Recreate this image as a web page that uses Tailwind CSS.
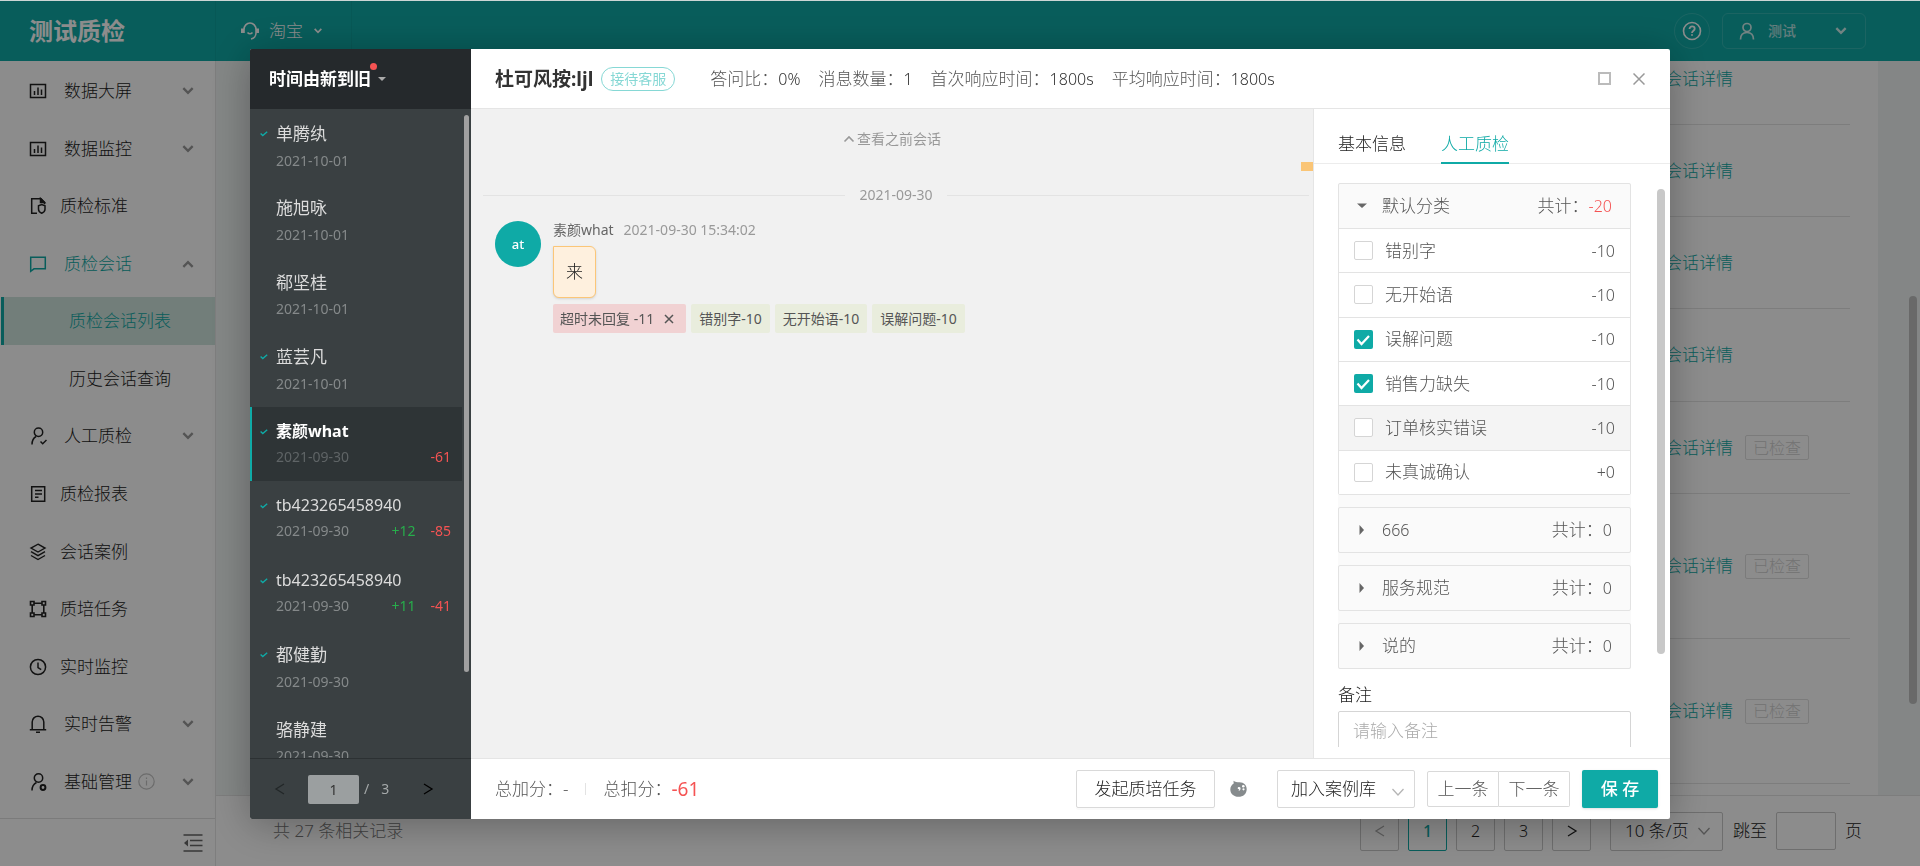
<!DOCTYPE html>
<html lang="zh-CN">
<head>
<meta charset="utf-8">
<title>测试质检</title>
<script src="https://cdn.jsdelivr.net/npm/@tailwindcss/browser@4"></script>
</head>
<body class="h-screen overflow-hidden bg-[#ccd6d5] pt-px font-['Noto_Sans','Noto_Sans_CJK_SC',sans-serif] text-[17px] font-light leading-6 text-[#222]">
<svg class="hidden" xmlns="http://www.w3.org/2000/svg">
  <symbol id="down" viewBox="0 0 12 12"><path d="M2 3.500l4 4 4-4" fill="none" stroke="currentColor" stroke-width="2"/></symbol>
  <symbol id="up" viewBox="0 0 12 12"><path d="M2 8.500l4-4 4 4" fill="none" stroke="currentColor" stroke-width="2"/></symbol>
  <symbol id="thin-up" viewBox="0 0 12 12"><path d="M1.500 8.500L6 4l4.500 4.500" fill="none" stroke="currentColor" stroke-width="1.600"/></symbol>
  <symbol id="thin-down" viewBox="0 0 14 14"><path d="M1.500 4l5.500 6 5.500-6" fill="none" stroke="currentColor" stroke-width="1.300"/></symbol>
  <symbol id="left" viewBox="0 0 12 12"><path d="M10 1L2 6l8 5" fill="none" stroke="currentColor" stroke-width="1.300"/></symbol>
  <symbol id="right" viewBox="0 0 12 12"><path d="M2 1l8 5-8 5" fill="none" stroke="currentColor" stroke-width="1.300"/></symbol>
  <symbol id="tick" viewBox="0 0 8 6"><path d="M.6 2.600l2.200 2L7.200.8" fill="none" stroke="currentColor" stroke-width="1.400"/></symbol>
  <symbol id="chart" viewBox="0 0 18 18"><path d="M1.500 2.500h15v13h-15zM5.500 9v4M9 5.500V13M12.500 7.500V13" fill="none" stroke="currentColor" stroke-width="1.500"/></symbol>
  <symbol id="user" viewBox="0 0 18 18"><circle cx="9" cy="5.500" r="4" fill="none" stroke="currentColor" stroke-width="1.700"/><path d="M2.500 17.500c0-4.500 2.500-7 6.500-7s6.500 2.500 6.500 7" fill="none" stroke="currentColor" stroke-width="1.700"/></symbol>
</svg>

<div class="flex h-full flex-col">
  <header class="flex h-[60px] shrink-0 items-center bg-[#0faaa6] pr-[54px] text-white">
    <h1 class="flex h-full w-[216px] items-center border-r border-black/5 pl-[29px] text-2xl font-bold">测试质检</h1>
    <button class="flex h-full w-[136px] items-center border-r border-black/5 pl-6">
      <svg class="size-5" viewBox="0 0 20 20" fill="none" stroke="currentColor" stroke-width="1.600"><path d="M4 12V8.500a6 6.500 0 0 1 12 0V12a6 6 0 0 1-5 6M7.500 11.500c1.500 1.700 3.500 1.700 5 0"/><path d="M2.500 7.500v4.500M17.500 7.500v4.500" stroke-width="3"/></svg>
      <span class="ml-[9px]">淘宝</span>
      <svg class="ml-2.5 size-2.5"><use href="#down"/></svg>
    </button>
    <button aria-label="帮助" class="ml-auto flex size-9 items-center justify-center rounded-full border border-white/15">
      <svg class="size-5" viewBox="0 0 20 20" fill="none" stroke="currentColor"><circle cx="10" cy="10" r="8.500" stroke-width="1.600"/><path d="M7.500 8c0-3.500 5.200-3.200 5.200-.3 0 2-2.700 2-2.700 4.200M10 13.200v1.600" stroke-width="1.800"/></svg>
    </button>
    <button class="ml-3 flex h-9 w-36 items-center rounded-md border border-white/15 pl-[15px] pr-[17px] text-white/80">
      <svg class="size-[18px]"><use href="#user"/></svg>
      <span class="ml-3 text-sm font-medium text-white/70">测试</span>
      <svg class="ml-auto size-3.5"><use href="#down"/></svg>
    </button>
  </header>

  <div class="flex min-h-0 flex-1">
    <aside class="flex w-[216px] shrink-0 flex-col border-r border-[#e6e6e6] bg-white">
      <nav class="flex min-h-0 flex-1 flex-col justify-between pb-3 pt-1.5">
        <a href="#" class="flex h-12 items-center pl-[29px] pr-5"><svg class="size-[18px]"><use href="#chart"/></svg><span class="ml-[17px]">数据大屏</span><svg class="ml-auto size-3.5 text-[#999]"><use href="#down"/></svg></a>
        <a href="#" class="flex h-12 items-center pl-[29px] pr-5"><svg class="size-[18px]"><use href="#chart"/></svg><span class="ml-[17px]">数据监控</span><svg class="ml-auto size-3.5 text-[#999]"><use href="#down"/></svg></a>
        <a href="#" class="flex h-12 items-center pl-[29px]"><svg class="size-[18px]" viewBox="0 0 18 18" fill="none" stroke="currentColor" stroke-width="1.500"><path d="M8 16.200H2.700V1.700H12l3.500 3.500v2"/><path d="M11.500 1.500v4h4z" fill="currentColor"/><path d="M9.500 8.700l3.200-1.200 3.300 1.200v3.500c0 2-1.500 3.300-3.300 4-1.700-.7-3.200-2-3.200-4z"/></svg><span class="ml-[13px]">质检标准</span></a>
        <a href="#" class="flex h-12 items-center pl-[29px] pr-5 text-[#0faaa6]"><svg class="size-[18px]" viewBox="0 0 18 18" fill="none" stroke="currentColor" stroke-width="1.500"><path d="M1.700 2.200h14.600v11.600H5l-3.300 2.500z"/></svg><span class="ml-[17px]">质检会话</span><svg class="ml-auto size-3.5 text-[#999]"><use href="#up"/></svg></a>
        <a href="#" class="ml-px flex h-12 items-center border-l-[3px] border-[#0faaa6] bg-[#cfe5df] pl-[65px] text-[#0faaa6]">质检会话列表</a>
        <a href="#" class="flex h-12 items-center pl-[69px]">历史会话查询</a>
        <a href="#" class="flex h-12 items-center pl-[29px] pr-5"><svg class="size-[18px]" viewBox="0 0 18 18" fill="none" stroke="currentColor" stroke-width="1.500"><circle cx="9.500" cy="5.200" r="4.200"/><path d="M3 17.500c0-4 1.500-6.500 4-8M11.500 14.500l2.200 2.200 3.800-3.700"/></svg><span class="ml-[17px]">人工质检</span><svg class="ml-auto size-3.5 text-[#999]"><use href="#down"/></svg></a>
        <a href="#" class="flex h-12 items-center pl-[29px]"><svg class="size-[18px]" viewBox="0 0 18 18" fill="none" stroke="currentColor" stroke-width="1.500"><path d="M2.700 1.700h13v14.600h-13zM6 5.500h7M6 9h7M6 12.300h3.500"/></svg><span class="ml-[13px]">质检报表</span></a>
        <a href="#" class="flex h-12 items-center pl-[29px]"><svg class="size-[18px]" viewBox="0 0 18 18" fill="none" stroke="currentColor" stroke-width="1.400"><path d="M9 1.200l7 3.900-7 3.900-7-3.900zM2 8.700l7 4 7-4M2 12.500l7 4 7-4"/></svg><span class="ml-[13px]">会话案例</span></a>
        <a href="#" class="flex h-12 items-center pl-[29px]"><svg class="size-[18px]" viewBox="0 0 18 18" fill="none" stroke="currentColor" stroke-width="1.600"><path d="M1.500 1.500h3.500V5H1.500zM13 1.500h3.500V5H13zM1.500 13h3.500v3.500H1.500zM13 13h3.500v3.500H13zM5 3.200h8M5 14.800h8M3.200 5v8M14.800 5v8"/></svg><span class="ml-[13px]">质培任务</span></a>
        <a href="#" class="flex h-12 items-center pl-[29px]"><svg class="size-[18px]" viewBox="0 0 18 18" fill="none" stroke="currentColor" stroke-width="1.500"><circle cx="9" cy="9" r="7.600"/><path d="M9 4.500v5l3.200 2.200"/></svg><span class="ml-[13px]">实时监控</span></a>
        <a href="#" class="flex h-12 items-center pl-[29px] pr-5"><svg class="size-[18px]" viewBox="0 0 18 18" fill="none" stroke="currentColor" stroke-width="1.500"><path d="M.8 14.700h16.400M3.200 14.500V7a5.800 5.800 0 0 1 11.600 0v7.500M7 17.200h4"/></svg><span class="ml-[17px]">实时告警</span><svg class="ml-auto size-3.5 text-[#999]"><use href="#down"/></svg></a>
        <a href="#" class="flex h-12 items-center pl-[29px] pr-5"><svg class="size-[18px]" viewBox="0 0 18 18" fill="none" stroke="currentColor" stroke-width="1.500"><circle cx="9.500" cy="5" r="4.200"/><path d="M3 17.500c0-4 1.500-6.500 4.500-8"/><circle cx="14" cy="14.500" r="2.400" stroke-width="2"/></svg><span class="ml-[17px]">基础管理</span><svg class="ml-1.5 size-[17px] text-[#c4c4c4]" viewBox="0 0 17 17" fill="none" stroke="currentColor" stroke-width="1.200"><circle cx="8.500" cy="8.500" r="7.700"/><path d="M8.500 7.500v5M8.500 4.500v1.400"/></svg><svg class="ml-auto size-3.5 text-[#999]"><use href="#down"/></svg></a>
      </nav>
      <div class="flex h-12 shrink-0 items-center justify-end border-t border-[#e0e0e0] pr-3">
        <button aria-label="收起菜单" class="text-[#666]"><svg class="size-5" viewBox="0 0 20 20" fill="none" stroke="currentColor" stroke-width="1.500"><path d="M.5 2h19M7 7.500h12.500M7 12.500h12.500M.5 18h19"/><path d="M5 6.500v7L1 10z" fill="currentColor" stroke="none"/></svg></button>
      </div>
    </aside>

    <main class="relative flex min-w-0 flex-1 flex-col bg-[#f0f5f4]">
      <div class="flex min-h-0 flex-1 flex-col overflow-hidden pl-9 pr-[42px]">
        <div class="flex min-h-0 flex-1 flex-col justify-end bg-white pb-[11px] pl-9 pr-7">
          <div class="flex h-[92px] shrink-0 items-center border-b border-[#e4e4e4] pr-[41px]"><a href="#" class="ml-auto mr-[76px] text-[#0faaa6]">会话详情</a></div>
          <div class="flex h-[92px] shrink-0 items-center border-b border-[#e4e4e4] pr-[41px]"><a href="#" class="ml-auto mr-[76px] text-[#0faaa6]">会话详情</a></div>
          <div class="flex h-[92px] shrink-0 items-center border-b border-[#e4e4e4] pr-[41px]"><a href="#" class="ml-auto mr-[76px] text-[#0faaa6]">会话详情</a></div>
          <div class="flex h-[93px] shrink-0 items-center border-b border-[#e4e4e4] pr-[41px]"><a href="#" class="ml-auto mr-[76px] text-[#0faaa6]">会话详情</a></div>
          <div class="flex h-[92px] shrink-0 items-center border-b border-[#e4e4e4] pr-[41px]"><a href="#" class="ml-auto text-[#0faaa6]">会话详情</a><span class="ml-3 flex h-[25px] w-16 items-center justify-center rounded-xs border border-[#e0e0e0] text-base text-[#d0d0d0]">已检查</span></div>
          <div class="flex h-[145px] shrink-0 items-center border-b border-[#e4e4e4] pr-[41px]"><a href="#" class="ml-auto text-[#0faaa6]">会话详情</a><span class="ml-3 flex h-[25px] w-16 items-center justify-center rounded-xs border border-[#e0e0e0] text-base text-[#d0d0d0]">已检查</span></div>
          <div class="flex h-[145px] shrink-0 items-center border-b border-[#e4e4e4] pr-[41px]"><a href="#" class="ml-auto text-[#0faaa6]">会话详情</a><span class="ml-3 flex h-[25px] w-16 items-center justify-center rounded-xs border border-[#e0e0e0] text-base text-[#d0d0d0]">已检查</span></div>
        </div>
      </div>
      <div class="absolute right-[3px] top-[235px] h-[408px] w-2 rounded-full bg-[#c0c0c0]"></div>
      <footer class="flex h-[71px] shrink-0 items-center border-t border-[#e4e4e4] bg-white pl-[57px] pr-[58px]">
        <span class="text-[#777]">共 27 条相关记录</span>
        <div class="ml-auto flex items-center gap-[9px] text-base">
          <button aria-label="上一页" class="flex size-[39px] items-center justify-center rounded-xs border border-[#c8c8c8] text-[#aaa]"><svg class="size-3"><use href="#left"/></svg></button>
          <button class="size-[39px] rounded-xs border border-[#0faaa6] font-medium text-[#0faaa6]">1</button>
          <button class="size-[39px] rounded-xs border border-[#c8c8c8]">2</button>
          <button class="size-[39px] rounded-xs border border-[#c8c8c8]">3</button>
          <button aria-label="下一页" class="flex size-[39px] items-center justify-center rounded-xs border border-[#c8c8c8]"><svg class="size-3"><use href="#right"/></svg></button>
        </div>
        <div class="relative ml-[19px] h-[39px] w-[113px]">
          <select aria-label="每页条数" class="h-full w-full appearance-none rounded-xs border border-[#c8c8c8] pl-3.5"><option>10 条/页</option></select>
          <svg class="pointer-events-none absolute right-3 top-3 size-3.5 text-[#999]"><use href="#thin-down"/></svg>
        </div>
        <label class="ml-2.5 flex items-center">跳至<input type="text" class="mx-[9px] h-[38px] w-[60px] rounded-xs border border-[#c8c8c8]">页</label>
      </footer>
    </main>
  </div>
</div>

<div class="fixed inset-x-0 bottom-0 top-px flex bg-black/45 px-[250px] pb-[47px] pt-12">
  <section role="dialog" aria-label="会话详情" class="flex min-w-0 flex-1 overflow-hidden rounded-xs bg-white shadow-[0_5px_40px_rgba(0,0,0,0.3)]">
    <div class="flex w-[221px] shrink-0 flex-col bg-[#3a4042] text-white">
      <div class="flex h-[60px] shrink-0 items-center bg-[#25292c] pl-[19px]">
        <button class="relative flex items-center font-bold">时间由新到旧<span class="absolute -top-1 left-[101px] size-[7px] rounded-full bg-[#f55353]"></span><svg class="ml-[7px] size-2 text-[#aaa]" viewBox="0 0 8 8"><path d="M0 2h8L4 6z" fill="currentColor"/></svg></button>
      </div>
      <div class="relative min-h-0 flex-1 overflow-hidden">
        <ul class="mr-[9px] grid h-[670px] auto-rows-fr text-base font-normal text-[#dcdcdc]">
          <li class="grid grid-cols-[26px_1fr] pt-3"><svg class="ml-2.5 mt-2.5 h-1.5 w-2 text-[#0faaa6]"><use href="#tick"/></svg><div><div class="text-[17px]">单腾纨</div><div class="mt-1 text-sm text-[#85898a]">2021-10-01</div></div></li>
          <li class="grid grid-cols-[26px_1fr] pt-3"><div class="col-start-2"><div class="text-[17px]">施旭咏</div><div class="mt-1 text-sm text-[#85898a]">2021-10-01</div></div></li>
          <li class="grid grid-cols-[26px_1fr] pt-3"><div class="col-start-2"><div class="text-[17px]">郗坚桂</div><div class="mt-1 text-sm text-[#85898a]">2021-10-01</div></div></li>
          <li class="grid grid-cols-[26px_1fr] pt-3"><svg class="ml-2.5 mt-2.5 h-1.5 w-2 text-[#0faaa6]"><use href="#tick"/></svg><div><div class="text-[17px]">蓝芸凡</div><div class="mt-1 text-sm text-[#85898a]">2021-10-01</div></div></li>
          <li class="grid grid-cols-[24px_1fr] border-l-2 border-[#0faaa6] bg-[#2e3436] pt-3"><svg class="ml-2 mt-2.5 h-1.5 w-2 text-[#0faaa6]"><use href="#tick"/></svg><div><div class="font-bold text-white">素颜what</div><div class="mt-1 flex pr-[11px] text-sm text-[#5f6466]">2021-09-30<span class="ml-auto text-[#f55353]">-61</span></div></div></li>
          <li class="grid grid-cols-[26px_1fr] pt-3"><svg class="ml-2.5 mt-2.5 h-1.5 w-2 text-[#0faaa6]"><use href="#tick"/></svg><div><div>tb423265458940</div><div class="mt-1 flex pr-[11px] text-sm text-[#85898a]">2021-09-30<span class="ml-auto text-[#27ae4b]">+12</span><span class="ml-[15px] text-[#f55353]">-85</span></div></div></li>
          <li class="grid grid-cols-[26px_1fr] pt-3"><svg class="ml-2.5 mt-2.5 h-1.5 w-2 text-[#0faaa6]"><use href="#tick"/></svg><div><div>tb423265458940</div><div class="mt-1 flex pr-[11px] text-sm text-[#85898a]">2021-09-30<span class="ml-auto text-[#27ae4b]">+11</span><span class="ml-[15px] text-[#f55353]">-41</span></div></div></li>
          <li class="grid grid-cols-[26px_1fr] pt-3"><svg class="ml-2.5 mt-2.5 h-1.5 w-2 text-[#0faaa6]"><use href="#tick"/></svg><div><div class="text-[17px]">都健勤</div><div class="mt-1 text-sm text-[#85898a]">2021-09-30</div></div></li>
          <li class="grid grid-cols-[26px_1fr] pt-3"><div class="col-start-2"><div class="text-[17px]">骆静建</div><div class="mt-1 text-sm text-[#85898a]">2021-09-30</div></div></li>
        </ul>
        <div class="absolute right-0.5 top-1.5 h-[557px] w-[5px] rounded-full bg-[#a0a0a0]"></div>
      </div>
      <div class="flex h-[61px] shrink-0 items-center border-t border-[#2c3133] pl-6 text-sm font-normal text-[#a5a9aa]">
        <button aria-label="上一页" class="text-[#222728]"><svg class="size-3"><use href="#left"/></svg></button>
        <input type="text" aria-label="页码" value="1" class="ml-[22px] h-[29px] w-[51px] rounded-xs bg-[#9b9fa0] text-center text-[#333]">
        <span class="ml-[5px]">/</span><span class="ml-3">3</span>
        <button aria-label="下一页" class="ml-[33px] text-black"><svg class="size-3"><use href="#right"/></svg></button>
      </div>
    </div>

    <div class="flex min-w-0 flex-1 flex-col">
      <div class="flex h-[60px] shrink-0 items-center border-b border-[#e5e5e5] pl-6 pr-[25px] text-[#555]">
        <h2 class="text-[19px] font-bold text-[#333]">杜可风按:ljl</h2>
        <span class="ml-2 flex h-6 w-[74px] items-center justify-center rounded-full border border-[#86d8d5] text-sm font-normal text-[#86d8d5]">接待客服</span>
        <dl class="ml-[35px] flex gap-[18px]">
          <div class="flex"><dt>答问比：</dt><dd class="text-base leading-6 text-[#333]">0%</dd></div>
          <div class="flex"><dt>消息数量：</dt><dd class="text-base leading-6 text-[#333]">1</dd></div>
          <div class="flex"><dt>首次响应时间：</dt><dd class="text-base leading-6 text-[#333]">1800s</dd></div>
          <div class="flex"><dt>平均响应时间：</dt><dd class="text-base leading-6 text-[#333]">1800s</dd></div>
        </dl>
        <button aria-label="最大化" class="ml-auto size-[13px] border-2 border-[#bbb]"></button>
        <button aria-label="关闭" class="ml-[22px] text-[#999]"><svg class="size-3" viewBox="0 0 12 12"><path d="M.5.5l11 11M11.500.5l-11 11" stroke="currentColor" stroke-width="1.500"/></svg></button>
      </div>

      <div class="flex min-h-0 flex-1">
        <div class="relative min-w-0 flex-1 bg-[#f1f1f1] px-1 pt-[18px] text-sm font-normal leading-6">
          <button class="mx-auto flex items-center gap-0.5 leading-6 text-[#999]"><svg class="size-3"><use href="#thin-up"/></svg>查看之前会话</button>
          <div class="ml-2 mt-8 flex items-center gap-3.5 text-[#999]"><hr class="flex-1 border-[#e3e3e3]">2021-09-30<hr class="flex-1 border-[#e3e3e3]"></div>
          <div class="ml-5 mt-[3px] flex gap-3">
            <div class="mt-[11px] flex size-[46px] shrink-0 items-center justify-center rounded-full bg-[#0faaa6] text-[13px] font-medium text-white">at</div>
            <div class="flex flex-col items-start">
              <div class="mt-2 text-[#666]">素颜what<span class="ml-2.5 text-[#999]">2021-09-30 15:34:02</span></div>
              <div class="mt-1 flex h-[52px] w-[43px] items-center justify-center rounded-md rounded-tl-none border border-[#fbc678] bg-[#fef0de] text-[17px] font-light text-[#222] shadow-sm">来</div>
              <div class="mt-1.5 flex gap-[5px] text-[#555]">
                <span class="flex h-[29px] items-center rounded-xs bg-[#f1d2d3] pl-[7px] pr-3">超时未回复 -11<button aria-label="移除" class="ml-2.5"><svg class="size-2.5" viewBox="0 0 10 10"><path d="M1 1l8 8M9 1L1 9" stroke="currentColor" stroke-width="1.500"/></svg></button></span>
                <span class="flex h-[29px] items-center rounded-xs bg-[#e9eddd] px-2">错别字-10</span>
                <span class="flex h-[29px] items-center rounded-xs bg-[#e9eddd] px-2">无开始语-10</span>
                <span class="flex h-[29px] items-center rounded-xs bg-[#e9eddd] px-2">误解问题-10</span>
              </div>
            </div>
          </div>
          <div class="absolute right-0 top-[53px] h-[9px] w-3 bg-[#fac576]"></div>
        </div>

        <div class="relative flex w-[357px] shrink-0 flex-col border-l border-[#e5e5e5] pb-[11px] text-[#555]">
          <div class="flex h-[55px] shrink-0 items-end gap-[35px] border-b border-[#ececec] pl-6">
            <button class="-mb-px h-8 border-b-2 border-transparent pb-2 text-[#222]">基本信息</button>
            <button class="-mb-px h-8 border-b-2 border-[#0faaa6] pb-2 text-[#0faaa6]">人工质检</button>
          </div>
          <div class="min-h-0 flex-1 overflow-hidden pl-6 pr-[39px] pt-[19px]">
            <div class="flex flex-col gap-3 bg-[#fafafa]">
              <div class="rounded-xs border border-[#e3e3e3]">
                <div class="flex h-11 items-center pl-[18px] pr-[18px]"><svg class="size-2.5 text-[#666]" viewBox="0 0 10 10"><path d="M0 2.500h10L5 7z" fill="currentColor"/></svg><span class="ml-[15px]">默认分类</span><span class="ml-auto">共计：</span><span class="text-base text-[#f55353]">-20</span></div>
                <div class="grid h-[266px] auto-rows-fr bg-white">
                  <label class="flex items-center border-t border-[#e3e3e3] px-[15px]"><input type="checkbox" class="size-[19px] appearance-none rounded-xs border border-[#d5d5d5] bg-white"><span class="ml-3">错别字</span><span class="ml-auto text-base">-10</span></label>
                  <label class="flex items-center border-t border-[#e3e3e3] px-[15px]"><input type="checkbox" class="size-[19px] appearance-none rounded-xs border border-[#d5d5d5] bg-white"><span class="ml-3">无开始语</span><span class="ml-auto text-base">-10</span></label>
                  <label class="flex items-center border-t border-[#e3e3e3] px-[15px]"><span class="grid"><input type="checkbox" checked class="col-start-1 row-start-1 size-[19px] appearance-none rounded-xs bg-[#0faaa6]"><svg class="pointer-events-none col-start-1 row-start-1 size-[19px] text-white" viewBox="0 0 19 19"><path d="M3.500 9.500l4 4.500 7.500-8" fill="none" stroke="currentColor" stroke-width="2.200"/></svg></span><span class="ml-3">误解问题</span><span class="ml-auto text-base">-10</span></label>
                  <label class="flex items-center border-t border-[#e3e3e3] px-[15px]"><span class="grid"><input type="checkbox" checked class="col-start-1 row-start-1 size-[19px] appearance-none rounded-xs bg-[#0faaa6]"><svg class="pointer-events-none col-start-1 row-start-1 size-[19px] text-white" viewBox="0 0 19 19"><path d="M3.500 9.500l4 4.500 7.500-8" fill="none" stroke="currentColor" stroke-width="2.200"/></svg></span><span class="ml-3">销售力缺失</span><span class="ml-auto text-base">-10</span></label>
                  <label class="flex items-center border-t border-[#e3e3e3] bg-[#f4f4f4] px-[15px]"><input type="checkbox" class="size-[19px] appearance-none rounded-xs border border-[#d5d5d5] bg-white"><span class="ml-3">订单核实错误</span><span class="ml-auto text-base">-10</span></label>
                  <label class="flex items-center border-t border-[#e3e3e3] px-[15px]"><input type="checkbox" class="size-[19px] appearance-none rounded-xs border border-[#d5d5d5] bg-white"><span class="ml-3">未真诚确认</span><span class="ml-auto text-base">+0</span></label>
                </div>
              </div>
              <button class="flex h-[46px] items-center rounded-xs border border-[#e3e3e3] pl-[18px] pr-[18px]"><svg class="size-2.5 text-[#666]" viewBox="0 0 10 10"><path d="M2.500 0v10L7 5z" fill="currentColor"/></svg><span class="ml-[15px] text-base">666</span><span class="ml-auto">共计：</span><span class="text-base">0</span></button>
              <button class="flex h-[46px] items-center rounded-xs border border-[#e3e3e3] pl-[18px] pr-[18px]"><svg class="size-2.5 text-[#666]" viewBox="0 0 10 10"><path d="M2.500 0v10L7 5z" fill="currentColor"/></svg><span class="ml-[15px]">服务规范</span><span class="ml-auto">共计：</span><span class="text-base">0</span></button>
              <button class="flex h-[46px] items-center rounded-xs border border-[#e3e3e3] pl-[18px] pr-[18px]"><svg class="size-2.5 text-[#666]" viewBox="0 0 10 10"><path d="M2.500 0v10L7 5z" fill="currentColor"/></svg><span class="ml-[15px]">说的</span><span class="ml-auto">共计：</span><span class="text-base">0</span></button>
            </div>
            <label for="remark" class="mt-3.5 block text-[#222]">备注</label>
            <textarea id="remark" placeholder="请输入备注" class="mt-1 block h-20 w-full resize-none rounded-xs border border-[#d5d5d5] px-3.5 py-[7px] placeholder:text-[#aaa]"></textarea>
          </div>
          <div class="absolute right-[5px] top-20 h-[465px] w-2 rounded-full bg-[#c8c8c8]"></div>
        </div>
      </div>

      <div class="flex h-[61px] shrink-0 items-center border-t border-[#e5e5e5] pl-6 pr-3 text-[#555]">
        <span>总加分：</span><span>-</span>
        <span class="ml-[17px] h-3 w-px bg-[#e3e3e3]"></span>
        <span class="ml-[17px]">总扣分：</span><span class="text-[19px] font-normal text-[#f55353]">-61</span>
        <button class="ml-auto h-[38px] w-[139px] rounded-xs border border-[#d9d9d9] text-[#222] shadow-[0_2px_0_rgba(0,0,0,0.02)]">发起质培任务</button>
        <svg class="ml-[15px] h-[18px] w-[17px]" viewBox="0 0 17 18"><path d="M3.500.8C5 2 7 2.300 9.500 2.300c4.500 0 7.200 3 7.200 6.900 0 4.500-3.500 7.600-8.200 7.600S.3 13.800.3 9.500c0-2.800 1.500-4.800 3.400-6z" fill="#868b8d"/><path d="M7.800 7.500c2-1 3 0 2.700 1.500s-1.200 2-2 1.500c1.200-.8.900-1.700-.7-1.500z" fill="#fff"/><circle cx="13.300" cy="6.200" r="1.300" fill="#fff"/><circle cx="13.500" cy="9.300" r="1.100" fill="#fff"/></svg>
        <div class="relative ml-[30px] h-[38px] w-[138px]">
          <select aria-label="加入案例库" class="h-full w-full appearance-none rounded-xs border border-[#d9d9d9] pl-[13px] text-[#222]"><option>加入案例库</option></select>
          <svg class="pointer-events-none absolute right-2.5 top-[15px] size-3.5 text-[#b5b5b5]"><use href="#thin-down"/></svg>
        </div>
        <div class="ml-3 flex h-9"><button class="w-[72px] rounded-l-xs border border-[#d9d9d9]">上一条</button><button class="w-[71px] rounded-r-xs border border-l-0 border-[#d9d9d9]">下一条</button></div>
        <button class="ml-3 h-[38px] w-[76px] rounded-xs bg-[#0faaa6] font-medium text-white shadow-sm">保 存</button>
      </div>
    </div>
  </section>
</div>
</body>
</html>
